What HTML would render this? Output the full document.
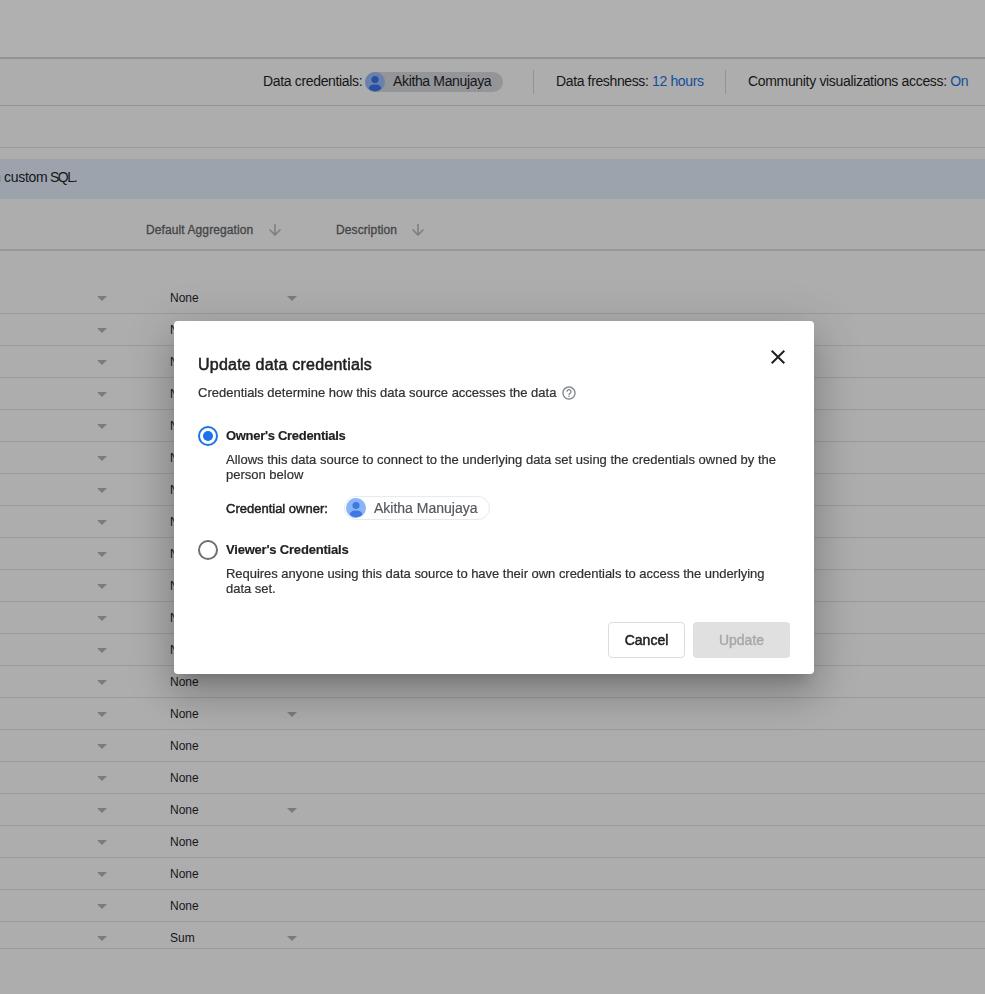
<!DOCTYPE html>
<html><head><meta charset="utf-8">
<style>
*{margin:0;padding:0;box-sizing:border-box}
html,body{width:985px;height:994px;overflow:hidden}
body{position:relative;background:#adadad;font-family:"Liberation Sans",sans-serif;color:#161618}
.abs{position:absolute}
.top{position:absolute;left:0;top:0;width:985px;height:57px;background:#b0b0b0}
.line{position:absolute;left:0;width:985px;background:#939393}
.hl{position:absolute;left:0;width:985px;height:1px;background:#999a9b}
.rt{position:absolute;left:170px;font-size:12px;line-height:16px;white-space:nowrap}
.tri{position:absolute;width:0;height:0;border-left:5px solid transparent;border-right:5px solid transparent;border-top:5px solid #7b7b7b}
.hdr{position:absolute;top:69px;font-size:14px;line-height:24px;white-space:nowrap;color:#161618}
.blue{color:#124e9e}
.vd{position:absolute;top:70px;width:1px;height:24px;background:#939393}
.chip{position:absolute;left:365px;top:72px;width:138px;height:20px;border-radius:10px;background:#939598}
.banner{position:absolute;left:0;top:159px;width:985px;height:40px;background:#9ca3ad}
.th{position:absolute;top:222px;font-size:12px;line-height:16px;-webkit-text-stroke:0.3px #434548;color:#434548;white-space:nowrap}
.overlay{}
.dialog{will-change:transform;position:absolute;left:174px;top:321px;width:640px;height:353px;background:#fff;border-radius:4px;
 box-shadow:0 11px 15px -7px rgba(0,0,0,.2),0 24px 38px 3px rgba(0,0,0,.14),0 9px 46px 8px rgba(0,0,0,.12);color:#202124}
.dialog .t{position:absolute;white-space:nowrap}
.btn{position:absolute;top:301px;height:36px;border-radius:4px;font-size:14px;line-height:34px;text-align:center}
</style></head><body>
<div class="top"></div>
<div class="line" style="top:57px;height:2px"></div>
<div class="line" style="top:105px;height:1px"></div>
<div class="line" style="top:147px;height:1px;background:#999a9b"></div>
<div class="chip"></div>
<div class="hdr" id="datacred" style="left:263px;letter-spacing:-0.34px">Data credentials:</div>
<svg class="abs" style="left:365px;top:72px" width="20" height="20" viewBox="0 0 20 20"><circle cx="10" cy="10" r="10" fill="#6a81ae"/><circle cx="10" cy="7.5" r="3.6" fill="#2a4f9e"/><path d="M3.8 16.5c0-2.6 2.8-4 6.2-4s6.2 1.4 6.2 4c-1.6 1.7-3.8 2.8-6.2 2.8s-4.6-1.100-6.2-2.8z" fill="#2a4f9e"/></svg>
<div class="hdr" id="akhdr" style="left:393px;letter-spacing:-0.35px">Akitha Manujaya</div>
<div class="vd" style="left:533px"></div>
<div class="hdr" id="fresh" style="left:556px;letter-spacing:-0.37px">Data freshness: <span class="blue">12 hours</span></div>
<div class="vd" style="left:725px"></div>
<div class="hdr" id="comm" style="left:748px;letter-spacing:-0.33px">Community visualizations access: <span class="blue">On</span></div>
<div class="banner"></div>
<div class="hdr" style="left:-7px;top:165px;font-size:14px;letter-spacing:-0.3px">n <span id="csql">custom</span><span id="sql" style="letter-spacing:-1.4px"> SQL.</span></div>
<div class="th" id="defagg" style="left:146px;letter-spacing:0.1px">Default Aggregation</div>
<svg class="abs" style="left:266px;top:221px" width="18" height="18" viewBox="0 0 24 24"><path fill="#7b7d80" d="M20 12l-1.41-1.41L13 16.17V4h-2v12.17l-5.58-5.59L4 12l8 8 8-8z"/></svg>
<div class="th" id="desc" style="left:336px;letter-spacing:0.1px">Description</div>
<svg class="abs" style="left:409px;top:221px" width="18" height="18" viewBox="0 0 24 24"><path fill="#7b7d80" d="M20 12l-1.41-1.41L13 16.17V4h-2v12.17l-5.58-5.59L4 12l8 8 8-8z"/></svg>
<div class="line" style="top:249px;height:2px;background:#97989a"></div>
<div class="rt" style="top:290px">None</div>
<div class="tri" style="top:296px;left:97px"></div>
<div class="tri" style="top:296px;left:287px"></div>
<div class="hl" style="top:313px"></div>
<div class="rt" style="top:322px">None</div>
<div class="tri" style="top:328px;left:97px"></div>
<div class="hl" style="top:345px"></div>
<div class="rt" style="top:354px">None</div>
<div class="tri" style="top:360px;left:97px"></div>
<div class="hl" style="top:377px"></div>
<div class="rt" style="top:386px">None</div>
<div class="tri" style="top:392px;left:97px"></div>
<div class="hl" style="top:409px"></div>
<div class="rt" style="top:418px">None</div>
<div class="tri" style="top:424px;left:97px"></div>
<div class="hl" style="top:441px"></div>
<div class="rt" style="top:450px">None</div>
<div class="tri" style="top:456px;left:97px"></div>
<div class="hl" style="top:473px"></div>
<div class="rt" style="top:482px">None</div>
<div class="tri" style="top:488px;left:97px"></div>
<div class="hl" style="top:505px"></div>
<div class="rt" style="top:514px">None</div>
<div class="tri" style="top:520px;left:97px"></div>
<div class="hl" style="top:537px"></div>
<div class="rt" style="top:546px">None</div>
<div class="tri" style="top:552px;left:97px"></div>
<div class="hl" style="top:569px"></div>
<div class="rt" style="top:578px">None</div>
<div class="tri" style="top:584px;left:97px"></div>
<div class="hl" style="top:601px"></div>
<div class="rt" style="top:610px">None</div>
<div class="tri" style="top:616px;left:97px"></div>
<div class="hl" style="top:633px"></div>
<div class="rt" style="top:642px">None</div>
<div class="tri" style="top:648px;left:97px"></div>
<div class="hl" style="top:665px"></div>
<div class="rt" style="top:674px">None</div>
<div class="tri" style="top:680px;left:97px"></div>
<div class="hl" style="top:697px"></div>
<div class="rt" style="top:706px">None</div>
<div class="tri" style="top:712px;left:97px"></div>
<div class="tri" style="top:712px;left:287px"></div>
<div class="hl" style="top:729px"></div>
<div class="rt" style="top:738px">None</div>
<div class="tri" style="top:744px;left:97px"></div>
<div class="hl" style="top:761px"></div>
<div class="rt" style="top:770px">None</div>
<div class="tri" style="top:776px;left:97px"></div>
<div class="hl" style="top:793px"></div>
<div class="rt" style="top:802px">None</div>
<div class="tri" style="top:808px;left:97px"></div>
<div class="tri" style="top:808px;left:287px"></div>
<div class="hl" style="top:825px"></div>
<div class="rt" style="top:834px">None</div>
<div class="tri" style="top:840px;left:97px"></div>
<div class="hl" style="top:857px"></div>
<div class="rt" style="top:866px">None</div>
<div class="tri" style="top:872px;left:97px"></div>
<div class="hl" style="top:889px"></div>
<div class="rt" style="top:898px">None</div>
<div class="tri" style="top:904px;left:97px"></div>
<div class="hl" style="top:921px"></div>
<div class="rt" style="top:930px">Sum</div>
<div class="tri" style="top:936px;left:97px"></div>
<div class="tri" style="top:936px;left:287px"></div>
<div class="hl" style="top:948px"></div>
<div class="dialog">
 <div class="t" style="left:24px;top:32px;font-size:16px;line-height:24px;-webkit-text-stroke:0.5px #202124;letter-spacing:0.22px" id="title">Update data credentials</div>
 <svg class="abs" style="left:592px;top:24px" width="24" height="24" viewBox="0 0 24 24"><path fill="#202124" d="M19 6.41L17.59 5 12 10.59 6.41 5 5 6.41 10.59 12 5 17.59 6.41 19 12 13.41 17.59 19 19 17.59 13.41 12z"/></svg>
 <div class="t" style="left:24px;top:64px;font-size:13px;line-height:16px;color:#2e3033;-webkit-text-stroke:0.2px #2e3033" id="sub">Credentials determine how this data source accesses the data</div>
 <svg class="abs" style="left:387px;top:64px" width="16" height="16" viewBox="0 0 24 24"><path fill="#80868b" d="M11 18h2v-2h-2v2zm1-16C6.48 2 2 6.48 2 12s4.48 10 10 10 10-4.48 10-10S17.52 2 12 2zm0 18c-4.41 0-8-3.59-8-8s3.59-8 8-8 8 3.59 8 8-3.590 8-8 8zm0-14c-2.21 0-4 1.79-4 4h2c0-1.1.9-2 2-2s2 .9 2 2c0 2-3 1.75-3 5h2c0-2.25 3-2.5 3-5 0-2.21-1.79-4-4-4z"/></svg>
 <svg class="abs" style="left:24px;top:105px" width="20" height="20" viewBox="0 0 20 20"><circle cx="10" cy="10" r="9" fill="none" stroke="#1a73e8" stroke-width="2"/><circle cx="10" cy="10" r="5" fill="#1a73e8"/></svg>
 <div class="t" style="left:52px;top:107px;font-size:13px;line-height:16px;font-weight:bold;letter-spacing:-0.3px;-webkit-text-stroke:0.15px #202124" id="owner">Owner's Credentials</div>
 <div class="t" style="left:52px;top:131px;font-size:13px;line-height:15px;color:#2e3033;-webkit-text-stroke:0.2px #2e3033" id="allows">Allows this data source to connect to the underlying data set using the credentials owned by the<br>person below</div>
 <div class="t" style="left:52px;top:180px;font-size:13px;line-height:16px;-webkit-text-stroke:0.45px #202124;letter-spacing:0px" id="credowner">Credential owner:</div>
 <div class="abs" style="left:170px;top:175px;width:146px;height:24px;border:1px solid #e8eaed;border-radius:12px"></div>
 <svg class="abs" style="left:172px;top:177px" width="20" height="20" viewBox="0 0 20 20"><circle cx="10" cy="10" r="10" fill="#8ab4f8"/><circle cx="10" cy="7.5" r="3.6" fill="#3f78e0"/><path d="M3.8 16.5c0-2.6 2.8-4 6.2-4s6.2 1.4 6.2 4c-1.6 1.700-3.8 2.8-6.2 2.8s-4.6-1.1-6.2-2.8z" fill="#3f78e0"/></svg>
 <div class="t" style="left:200px;top:178px;font-size:14px;line-height:18px;color:#55595e;-webkit-text-stroke:0.2px #55595e" id="chiptext">Akitha Manujaya</div>
 <svg class="abs" style="left:24px;top:219px" width="20" height="20" viewBox="0 0 20 20"><circle cx="10" cy="10" r="9" fill="none" stroke="#6f6f6f" stroke-width="2"/></svg>
 <div class="t" style="left:52px;top:221px;font-size:13px;line-height:16px;font-weight:bold;letter-spacing:-0.2px;-webkit-text-stroke:0.15px #202124" id="viewer">Viewer's Credentials</div>
 <div class="t" style="left:52px;top:245px;font-size:13px;line-height:15px;letter-spacing:-0.03px;color:#2e3033;-webkit-text-stroke:0.2px #2e3033" id="requires">Requires anyone using this data source to have their own credentials to access the underlying<br>data set.</div>
 <div class="btn" style="left:434px;width:77px;border:1px solid #dadce0;color:#202124"><span id="cancel" style="letter-spacing:0px;-webkit-text-stroke:0.5px #202124">Cancel</span></div>
 <div class="btn" style="left:519px;width:97px;background:#e0e0e0;color:#a8a8a8;line-height:36px"><span id="update" style="letter-spacing:0px;-webkit-text-stroke:0.4px #a8a8a8">Update</span></div>
</div>
</body></html>
